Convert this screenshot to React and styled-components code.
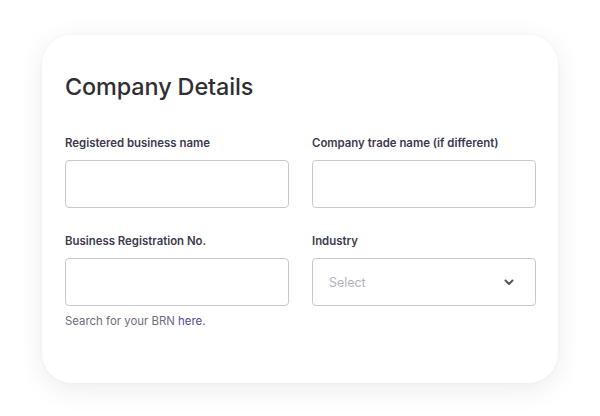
import React from "react";
import styled, { createGlobalStyle } from "styled-components";

const GlobalStyle = createGlobalStyle`
  html, body {
    margin: 0;
    padding: 0;
    background: #ffffff;
  }
  body {
    font-family: Inter, "Noto Sans", sans-serif;
  }
`;

const Page = styled.div`
  width: 600px;
  height: 416px;
  box-sizing: border-box;
  padding: 35px 42px 0 42px;
  background: #fff;
`;

const Card = styled.div`
  box-sizing: border-box;
  width: 516px;
  height: 348px;
  background: #fff;
  border-radius: 30px;
  box-shadow: 0 6px 28px rgba(0, 0, 0, 0.08), 0 0 4px rgba(0, 0, 0, 0.03);
  padding: 38px 22px 0 23px;
`;

const Title = styled.h2`
  margin: 0 0 35px 0;
  font-size: 23.4px;
  line-height: 28px;
  font-weight: 500;
  color: #2f2f33;
  letter-spacing: -0.1px;
`;

const Grid = styled.div`
  display: grid;
  grid-template-columns: 224px 224px;
  column-gap: 23px;
  row-gap: 26px;
`;

const Field = styled.div`
  display: flex;
  flex-direction: column;
`;

const Label = styled.label`
  font-size: 11.4px;
  line-height: 14px;
  font-weight: 600;
  color: #3d3a4d;
  margin-bottom: 10px;
`;

const Input = styled.input`
  box-sizing: border-box;
  width: 100%;
  height: 48px;
  border: 1px solid #c9c7d0;
  border-radius: 4px;
  background: #fff;
  font-family: inherit;
  font-size: 12px;
  padding: 0 16px;
  outline: none;
`;

const SelectBox = styled.div`
  box-sizing: border-box;
  height: 48px;
  border: 1px solid #c9c7d0;
  border-radius: 4px;
  display: flex;
  align-items: center;
  justify-content: space-between;
  padding: 0 21px 0 16px;
  color: #b3b1bd;
  font-size: 12.4px;
`;

const Helper = styled.p`
  margin: 8px 0 0 0;
  font-size: 11.4px;
  line-height: 14px;
  color: #6e6c7a;
`;

const Link = styled.a`
  color: #4f4a9e;
  text-decoration: none;
`;

const Chevron = () => (
  <svg width="10" height="7" viewBox="0 0 10 7">
    <path
      d="M1.5 1.5 L5 5 L8.5 1.5"
      fill="none"
      stroke="#55546a"
      strokeWidth="2"
      strokeLinecap="round"
      strokeLinejoin="round"
    />
  </svg>
);

export default function App() {
  return (
    <Page>
      <GlobalStyle />
      <Card>
        <Title>Company Details</Title>
        <Grid>
          <Field>
            <Label>Registered business name</Label>
            <Input />
          </Field>
          <Field>
            <Label>Company trade name (if different)</Label>
            <Input />
          </Field>
          <Field>
            <Label>Business Registration No.</Label>
            <Input />
            <Helper>
              Search for your BRN <Link href="#">here.</Link>
            </Helper>
          </Field>
          <Field>
            <Label>Industry</Label>
            <SelectBox>
              <span>Select</span>
              <Chevron />
            </SelectBox>
          </Field>
        </Grid>
      </Card>
    </Page>
  );
}
